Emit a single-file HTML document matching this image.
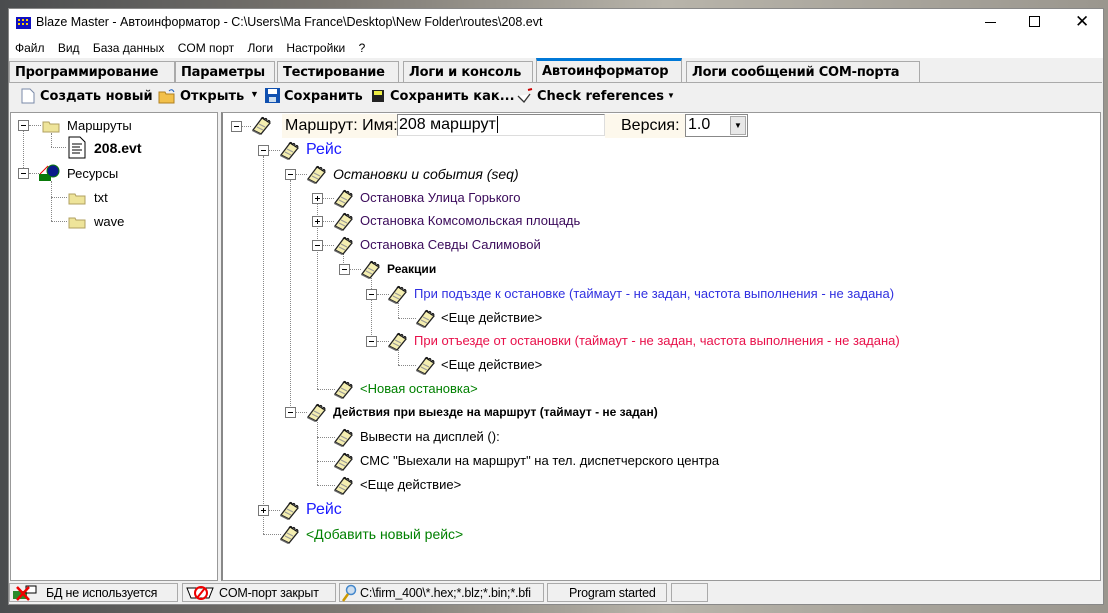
<!DOCTYPE html>
<html><head><meta charset="utf-8">
<style>
*{margin:0;padding:0;box-sizing:border-box}
body{width:1108px;height:613px;overflow:hidden;position:relative;background:linear-gradient(90deg,#4a4c4e,#7a7670 30%,#b8b4aa 60%,#9a968e);font-family:"Liberation Sans",sans-serif;}
.a{position:absolute;white-space:nowrap}
#win{position:absolute;left:8px;top:8px;width:1096px;height:597px;background:#f0f0f0;border:1px solid #888}
.t{font-family:"DejaVu Sans","Liberation Sans",sans-serif;font-size:13px;font-weight:bold;letter-spacing:-0.2px}
.tab{position:absolute;top:61px;height:21px;border:1px solid #aaa;border-bottom:none;background:#f0f0f0;padding:3px 6px 0 5px}
.tb{font-family:"DejaVu Sans","Liberation Sans",sans-serif;font-size:13px;font-weight:bold;letter-spacing:0;top:89px}
.bx{position:absolute;width:11px;height:11px;border:1px solid #777;background:#fff}
.bx:before{content:"";position:absolute;left:2px;top:4px;width:5px;height:1px;background:#000}
.bx.p:after{content:"";position:absolute;left:4px;top:2px;width:1px;height:5px;background:#000}
.v{position:absolute;width:0;border-left:1px dotted #888}
.h{position:absolute;height:0;border-top:1px dotted #888}
.ic{position:absolute;width:22px;height:20px}
.tx{position:absolute;font-size:13px;white-space:nowrap;line-height:16px}
.st{position:absolute;top:583px;height:19px;border:1px solid #aaa;font-size:12.5px;padding:2px 0 0 2px;white-space:nowrap;letter-spacing:-0.2px}
</style></head><body>
<svg width="0" height="0" style="position:absolute">
<defs><symbol id="n" viewBox="0 0 22 20">
<path d="M3 15 L12 3 L20 8 L11 19 Z" fill="#f4eeb0" stroke="#222" stroke-width="1.3"/>
<path d="M3 15 L11 19 L10 20 L2 16Z" fill="#666"/>
<path d="M9 9 L15 12 M7 12 L13 15" stroke="#999" stroke-width="1"/>
<path d="M11 4 q2 -3 3 0 M14 5 q2 -3 3 0 M17 7 q2 -3 3 0" stroke="#111" fill="none" stroke-width="1.2"/>
</symbol></defs></svg>
<div id="win">
<div class="a" style="left:0;top:0;width:1094px;height:49px;background:#fff"></div>
</div>
<!-- title -->
<svg class="a" style="left:15px;top:15px" width="18" height="16"><rect x="1" y="2" width="15" height="12" fill="#1010c0"/><path d="M3 4h2v2H3zM7 4h2v2H7zM11 4h2v2h-2zM3 8h2v2H3zM7 8h2v2H7zM11 8h2v2h-2z" fill="#ffd000"/></svg>
<div class="a" style="left:36px;top:15px;font-size:12.5px">Blaze Master - Автоинформатор - C:\Users\Ma France\Desktop\New Folder\routes\208.evt</div>
<div class="a" style="left:985px;top:22px;width:11px;height:1px;background:#000"></div>
<div class="a" style="left:1029px;top:16px;width:11px;height:11px;border:1px solid #000"></div>
<div class="a" style="left:1075px;top:14px;font-size:17px;line-height:16px">✕</div>
<div class="a" style="left:15px;top:41px;font-size:12px;word-spacing:0">Файл&nbsp;&nbsp;&nbsp;&nbsp;Вид&nbsp;&nbsp;&nbsp;&nbsp;База данных&nbsp;&nbsp;&nbsp;&nbsp;COM порт&nbsp;&nbsp;&nbsp;&nbsp;Логи&nbsp;&nbsp;&nbsp;&nbsp;Настройки&nbsp;&nbsp;&nbsp;&nbsp;?</div>
<!-- tabs -->
<div class="tab t" style="left:9px;width:166px">Программирование</div>
<div class="tab t" style="left:175px;width:100px">Параметры</div>
<div class="tab t" style="left:277px;width:122px">Тестирование</div>
<div class="tab t" style="left:403px;width:130px">Логи и консоль</div>
<div class="tab t" style="left:536px;width:146px;top:58px;height:24px;border-top:3px solid #0078d7;padding-top:3px">Автоинформатор</div>
<div class="tab t" style="left:686px;width:234px">Логи сообщений COM-порта</div>
<div class="a" style="left:9px;top:82px;width:1093px;height:1px;background:#aaa"></div>
<!-- toolbar -->
<svg class="a" style="left:21px;top:88px" width="14" height="16"><path d="M1 1h8l4 4v10H1z" fill="#fff" stroke="#7a8aa8"/></svg>
<div class="a tb" style="left:40px">Создать новый</div>
<svg class="a" style="left:158px;top:88px" width="18" height="16"><path d="M1 4h6l1 2h8v9H1z" fill="#f2c04a" stroke="#b08020"/><path d="M11 3q3-3 5 1" stroke="#2060c0" fill="none"/></svg>
<div class="a tb" style="left:180px">Открыть</div>
<div class="a" style="left:250px;top:89px;font-size:9px">▼</div>
<svg class="a" style="left:265px;top:88px" width="15" height="15"><rect x="0" y="0" width="15" height="15" fill="#1050b0"/><rect x="3" y="1" width="9" height="5" fill="#fff"/><rect x="4" y="9" width="7" height="5" fill="#cde"/></svg>
<div class="a tb" style="left:284px">Сохранить</div>
<svg class="a" style="left:370px;top:88px" width="16" height="16"><rect x="2" y="2" width="12" height="12" fill="#222"/><rect x="4" y="3" width="8" height="4" fill="#ee4"/></svg>
<div class="a tb" style="left:390px">Сохранить как...</div>
<svg class="a" style="left:516px;top:88px" width="18" height="16"><path d="M2 8l6 6 6-8" stroke="#333" fill="#fff" stroke-width="1.3"/><path d="M12 2l4-1" stroke="#c00" stroke-width="2"/></svg>
<div class="a tb" style="left:537px">Check references</div>
<div class="a" style="left:667px;top:91px;font-size:8px">▼</div>
<!-- panels -->
<div class="a" style="left:10px;top:112px;width:208px;height:469px;background:#fff;border:1px solid #999"></div>
<div class="a" style="left:221px;top:112px;width:880px;height:469px;background:#fff;border:1px solid #999;border-left:2px solid #888"></div>
<!-- left tree -->
<div class="bx" style="left:18px;top:120px"></div>
<div class="bx" style="left:18px;top:168px"></div>
<div class="v" style="left:23px;top:131px;height:37px"></div>
<div class="h" style="left:29px;top:125px;width:12px"></div>
<div class="h" style="left:29px;top:173px;width:10px"></div>
<svg class="a" style="left:42px;top:119px" width="18" height="14"><path d="M1 3h6l1 2h9v8H1z" fill="#eee49a" stroke="#b0a060"/></svg>
<div class="tx" style="left:67px;top:118px;color:#000">Маршруты</div>
<div class="v" style="left:51px;top:133px;height:14px"></div>
<div class="h" style="left:51px;top:147px;width:15px"></div>
<svg class="a" style="left:66px;top:136px" width="22" height="24"><path d="M3 1h11l5 5v16H3z" fill="#fff" stroke="#000"/><path d="M6 8h10M6 11h8M6 14h10M6 17h8" stroke="#000"/></svg>
<div class="tx" style="left:94px;top:140px;font-weight:bold;font-size:14px">208.evt</div>
<svg class="a" style="left:38px;top:164px" width="22" height="18"><rect x="1" y="10" width="12" height="7" fill="#0a7a0a"/><path d="M2 10l8-8" stroke="#e00"/><circle cx="15" cy="7" r="6" fill="#0a1a8a" stroke="#0a7a0a"/></svg>
<div class="tx" style="left:67px;top:166px">Ресурсы</div>
<div class="v" style="left:51px;top:181px;height:40px"></div>
<div class="h" style="left:51px;top:197px;width:16px"></div>
<div class="h" style="left:51px;top:221px;width:16px"></div>
<svg class="a" style="left:68px;top:191px" width="18" height="14"><path d="M1 3h6l1 2h9v8H1z" fill="#eee49a" stroke="#b0a060"/></svg>
<svg class="a" style="left:68px;top:215px" width="18" height="14"><path d="M1 3h6l1 2h9v8H1z" fill="#eee49a" stroke="#b0a060"/></svg>
<div class="tx" style="left:94px;top:190px">txt</div>
<div class="tx" style="left:94px;top:214px">wave</div>

<!-- right tree vertical lines -->
<div class="v" style="left:263px;top:156px;height:378px"></div>
<div class="v" style="left:290px;top:180px;height:232px"></div>
<div class="v" style="left:317px;top:204px;height:185px"></div>
<div class="v" style="left:343px;top:252px;height:17px"></div>
<div class="v" style="left:371px;top:276px;height:65px"></div>
<div class="v" style="left:398px;top:300px;height:18px"></div>
<div class="v" style="left:398px;top:347px;height:18px"></div>
<div class="v" style="left:317px;top:418px;height:67px"></div>
<!-- horizontal -->
<div class="h" style="left:241px;top:126px;width:10px"></div>
<div class="h" style="left:268px;top:150px;width:12px"></div>
<div class="h" style="left:295px;top:174px;width:12px"></div>
<div class="h" style="left:322px;top:198px;width:12px"></div>
<div class="h" style="left:322px;top:221px;width:12px"></div>
<div class="h" style="left:322px;top:245px;width:12px"></div>
<div class="h" style="left:349px;top:269px;width:12px"></div>
<div class="h" style="left:377px;top:294px;width:12px"></div>
<div class="h" style="left:398px;top:318px;width:18px"></div>
<div class="h" style="left:377px;top:341px;width:12px"></div>
<div class="h" style="left:398px;top:365px;width:18px"></div>
<div class="h" style="left:317px;top:389px;width:18px"></div>
<div class="h" style="left:295px;top:412px;width:12px"></div>
<div class="h" style="left:317px;top:437px;width:18px"></div>
<div class="h" style="left:317px;top:461px;width:18px"></div>
<div class="h" style="left:317px;top:485px;width:18px"></div>
<div class="h" style="left:268px;top:510px;width:12px"></div>
<div class="h" style="left:263px;top:534px;width:18px"></div>
<!-- boxes -->
<div class="bx" style="left:231px;top:121px"></div>
<div class="bx" style="left:258px;top:145px"></div>
<div class="bx" style="left:285px;top:169px"></div>
<div class="bx p" style="left:312px;top:193px"></div>
<div class="bx p" style="left:312px;top:216px"></div>
<div class="bx" style="left:312px;top:240px"></div>
<div class="bx" style="left:339px;top:264px"></div>
<div class="bx" style="left:366px;top:289px"></div>
<div class="bx" style="left:366px;top:336px"></div>
<div class="bx" style="left:285px;top:407px"></div>
<div class="bx p" style="left:258px;top:505px"></div>
<!-- icons -->
<svg class="ic" style="left:250px;top:115px"><use href="#n"/></svg>
<svg class="ic" style="left:278px;top:140px"><use href="#n"/></svg>
<svg class="ic" style="left:305px;top:164px"><use href="#n"/></svg>
<svg class="ic" style="left:332px;top:188px"><use href="#n"/></svg>
<svg class="ic" style="left:332px;top:211px"><use href="#n"/></svg>
<svg class="ic" style="left:332px;top:235px"><use href="#n"/></svg>
<svg class="ic" style="left:359px;top:259px"><use href="#n"/></svg>
<svg class="ic" style="left:386px;top:284px"><use href="#n"/></svg>
<svg class="ic" style="left:414px;top:308px"><use href="#n"/></svg>
<svg class="ic" style="left:386px;top:331px"><use href="#n"/></svg>
<svg class="ic" style="left:414px;top:355px"><use href="#n"/></svg>
<svg class="ic" style="left:332px;top:379px"><use href="#n"/></svg>
<svg class="ic" style="left:305px;top:402px"><use href="#n"/></svg>
<svg class="ic" style="left:332px;top:427px"><use href="#n"/></svg>
<svg class="ic" style="left:332px;top:451px"><use href="#n"/></svg>
<svg class="ic" style="left:332px;top:475px"><use href="#n"/></svg>
<svg class="ic" style="left:278px;top:500px"><use href="#n"/></svg>
<svg class="ic" style="left:278px;top:524px"><use href="#n"/></svg>
<!-- root row -->
<div class="a" style="left:282px;top:114px;width:115px;height:24px;background:#fdf8ec"></div>
<div class="tx" style="left:285px;top:117px;font-size:16px;line-height:18px">Маршрут: Имя:</div>
<div class="a" style="left:397px;top:114px;width:208px;height:22px;border:1px solid #888;border-right-color:#ddd;border-bottom-color:#ddd;font-size:16px;padding:1px 1px;line-height:18px">208 маршрут<span style="border-left:1px solid #000;margin-left:1px"></span></div>
<div class="a" style="left:605px;top:114px;width:80px;height:24px;background:#fdf8ec"></div>
<div class="tx" style="left:621px;top:117px;font-size:16px;line-height:18px">Версия:</div>
<div class="a" style="left:685px;top:114px;width:63px;height:23px;border:1px solid #888;background:#fff;font-size:16px;padding:1px 2px;line-height:18px">1.0</div>
<div class="a" style="left:730px;top:116px;width:16px;height:19px;background:#e8e8e8;border:1px solid #aaa;font-size:8px;text-align:center;line-height:18px">▼</div>
<!-- texts -->
<div class="tx" style="left:306px;top:141px;font-size:16px;line-height:18px;color:#1a1aff">Рейс</div>
<div class="tx" style="left:333px;top:165px;font-size:14px;line-height:18px;font-style:italic">Остановки и события (seq)</div>
<div class="tx" style="left:360px;top:190px;color:#3a0a5a">Остановка Улица Горького</div>
<div class="tx" style="left:360px;top:213px;color:#3a0a5a">Остановка Комсомольская площадь</div>
<div class="tx" style="left:360px;top:237px;color:#3a0a5a">Остановка Севды Салимовой</div>
<div class="tx" style="left:387px;top:261px;font-weight:bold;font-size:12px">Реакции</div>
<div class="tx" style="left:414px;top:286px;color:#3030e0">При подъзде к остановке (таймаут - не задан, частота выполнения - не задана)</div>
<div class="tx" style="left:441px;top:310px">&lt;Еще действие&gt;</div>
<div class="tx" style="left:414px;top:333px;color:#e8104a">При отъезде от остановки (таймаут - не задан, частота выполнения - не задана)</div>
<div class="tx" style="left:441px;top:357px">&lt;Еще действие&gt;</div>
<div class="tx" style="left:360px;top:381px;color:#008000">&lt;Новая остановка&gt;</div>
<div class="tx" style="left:333px;top:404px;font-weight:bold;font-size:12px">Действия при выезде на маршрут (таймаут - не задан)</div>
<div class="tx" style="left:360px;top:429px">Вывести на дисплей ():</div>
<div class="tx" style="left:360px;top:453px">СМС "Выехали на маршрут" на тел. диспетчерского центра</div>
<div class="tx" style="left:360px;top:477px">&lt;Еще действие&gt;</div>
<div class="tx" style="left:306px;top:501px;font-size:16px;line-height:18px;color:#1a1aff">Рейс</div>
<div class="tx" style="left:306px;top:525px;font-size:14px;line-height:18px;color:#008000">&lt;Добавить новый рейс&gt;</div>
<!-- status -->
<div class="st" style="left:9px;width:169px;padding-left:36px">БД не используется</div>
<svg class="a" style="left:12px;top:585px" width="26" height="16"><rect x="1" y="6" width="14" height="8" fill="#2a8a2a"/><rect x="14" y="1" width="10" height="7" fill="#fff" stroke="#000"/><path d="M5 2l12 13M17 2L5 15" stroke="#e00" stroke-width="2.5"/></svg>
<div class="st" style="left:182px;width:154px;padding-left:36px">COM-порт закрыт</div>
<svg class="a" style="left:185px;top:585px" width="32" height="16"><path d="M2 3h26l-4 10H6z" fill="#fff" stroke="#000"/><circle cx="16" cy="8" r="6" fill="none" stroke="#e00" stroke-width="2"/><path d="M12 13l8-10" stroke="#e00" stroke-width="2"/></svg>
<div class="st" style="left:339px;width:205px;padding-left:20px;overflow:hidden">C:\firm_400\*.hex;*.blz;*.bin;*.bfi</div>
<svg class="a" style="left:341px;top:584px" width="16" height="18"><circle cx="10" cy="6" r="4.5" fill="#cde" stroke="#48c" stroke-width="1.5"/><path d="M7 10l-5 7" stroke="#c90" stroke-width="2.5"/></svg>
<div class="st" style="left:547px;width:120px;padding-left:21px">Program started</div>
<div class="st" style="left:671px;width:37px"></div>
</body></html>
